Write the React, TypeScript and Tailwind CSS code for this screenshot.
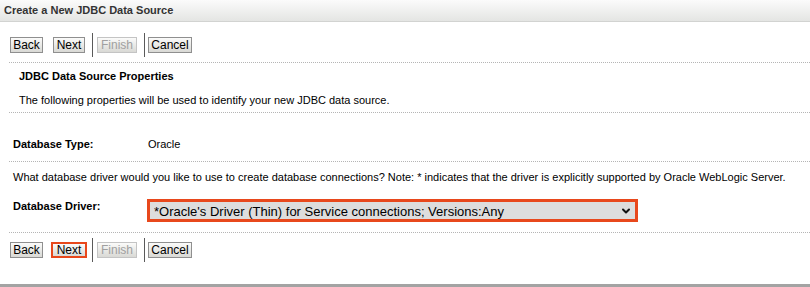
import { ChevronDown } from 'lucide-react'

const font = "font-['Liberation_Sans',Arial,sans-serif]"

function WizButton({ label, disabled, focused, className = '' }: { label: string; disabled?: boolean; focused?: boolean; className?: string }) {
  return (
    <button
      disabled={disabled}
      className={`h-[16px] flex items-center justify-center bg-gradient-to-b from-[#fbfbfa] to-[#d9d9d5] text-[12px] leading-none ${
        focused ? 'border-2 border-[#e8481c]' : 'border'
      } ${disabled ? 'text-[#a0a0a0] border-[#c4c4c4]' : 'text-black'} ${!focused && !disabled ? 'border-[#8f8f8f]' : ''} ${className}`}
    >
      {label}
    </button>
  )
}

function Separator({ className = '' }: { className?: string }) {
  return <div className={`h-[24px] w-px bg-[#5a5a5a] ${className}`} />
}

function Toolbar({ focusNext }: { focusNext?: boolean }) {
  return (
    <div className="h-[24px] flex items-center pl-[10px]">
      <WizButton label="Back" className="w-[33px]" />
      <WizButton label="Next" focused={focusNext} className={focusNext ? 'ml-[8px] w-[36px]' : 'ml-[10px] w-[32px]'} />
      <Separator className={focusNext ? 'ml-[5px]' : 'ml-[7px]'} />
      <WizButton label="Finish" disabled className="ml-[4px] w-[40px]" />
      <Separator className="ml-[7px]" />
      <WizButton label="Cancel" className="ml-[3px] w-[44px]" />
    </div>
  )
}

function Dots() {
  return <div className="ml-[9px] border-t border-dotted border-[#b5b5b5]" />
}

export default function App() {
  return (
    <div className={`${font} w-[810px] h-[287px] bg-white flex flex-col text-[11px] text-[#222] border-b-[3px] border-[#a3a3a3]`}>
      <div className="h-[22px] shrink-0 flex items-center pl-[4px] bg-gradient-to-b from-[#fbfbfb] to-[#e4e5e3] border-b border-[#d2d3d1] font-bold text-[#333]">
        Create a New JDBC Data Source
      </div>

      <div className="mt-[11px]">
        <Toolbar />
      </div>

      <div className="mt-[5px]">
        <Dots />
      </div>

      <div className="mt-[6px] h-[14px] leading-[14px] pl-[19px] font-bold text-black">JDBC Data Source Properties</div>
      <div className="mt-[10px] h-[14px] leading-[14px] pl-[19px] text-black">
        The following properties will be used to identify your new JDBC data source.
      </div>

      <div className="mt-[5px]">
        <Dots />
      </div>

      <div className="mt-[24px] h-[14px] leading-[14px] pl-[13px] flex text-black">
        <span className="w-[135px] font-bold">Database Type:</span>
        <span>Oracle</span>
      </div>

      <div className="mt-[10px]">
        <Dots />
      </div>

      <div className="mt-[8px] h-[14px] leading-[14px] pl-[13px] text-black">
        What database driver would you like to use to create database connections? Note: * indicates that the driver is explicitly supported by Oracle WebLogic Server.
      </div>

      <div className="mt-[15px] flex items-start pl-[13px] text-black">
        <span className="w-[134px] font-bold leading-[14px]">Database Driver:</span>
        <div className="relative w-[491px] h-[23px] border-[3px] border-[#e8481c]">
          <select className="appearance-none w-full h-full bg-[#dddddd] pl-[4px] text-[13px] text-black outline-none">
            <option>*Oracle's Driver (Thin) for Service connections; Versions:Any</option>
          </select>
          <ChevronDown className="absolute right-[3px] top-[3px] w-[12px] h-[12px] pointer-events-none" strokeWidth={4} color="#111" />
        </div>
      </div>

      <div className="mt-[10px]">
        <Dots />
      </div>

      <div className="mt-[5px]">
        <Toolbar focusNext />
      </div>
    </div>
  )
}
